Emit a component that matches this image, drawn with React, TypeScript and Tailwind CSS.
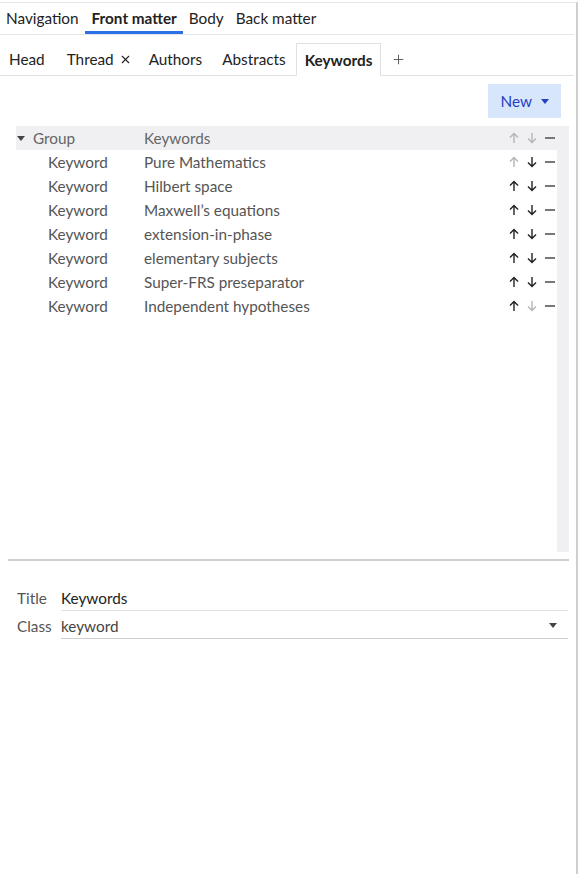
import { Plus, X } from 'lucide-react';

const keywords = [
  'Pure Mathematics',
  'Hilbert space',
  'Maxwell’s equations',
  'extension-in-phase',
  'elementary subjects',
  'Super-FRS preseparator',
  'Independent hypotheses',
];

function Arrow({ dir, faded }: { dir: 'up' | 'down'; faded?: boolean }) {
  return (
    <svg
      width="10"
      height="12"
      viewBox="0 0 10 12"
      className={faded ? 'text-[#b5b5b5]' : 'text-[#222]'}
    >
      {dir === 'up' ? (
        <path d="M5 11V1.5M1 5.5L5 1.5L9 5.5" stroke="currentColor" strokeWidth="1.4" fill="none" />
      ) : (
        <path d="M5 1v9.5M1 6.5L5 10.5L9 6.5" stroke="currentColor" strokeWidth="1.4" fill="none" />
      )}
    </svg>
  );
}

function RowActions({ upFaded, downFaded }: { upFaded?: boolean; downFaded?: boolean }) {
  return (
    <div className="flex items-center gap-[8px]">
      <Arrow dir="up" faded={upFaded} />
      <Arrow dir="down" faded={downFaded} />
      <div className="h-[2px] w-[10px] bg-[#777]" />
    </div>
  );
}

function Caret() {
  return (
    <svg width="8" height="5" viewBox="0 0 8 5">
      <path d="M0 0h8L4 5z" fill="currentColor" />
    </svg>
  );
}

export default function App() {
  const topTabs = ['Navigation', 'Front matter', 'Body', 'Back matter'];

  return (
    <div className="h-[874px] w-[578px] overflow-hidden bg-white font-['Lato',sans-serif] text-[15.3px] leading-[22px] text-[#222]">
      <div className="mt-[2px] flex h-[872px] flex-col border-t border-r-2 border-t-[#e6e4ec] border-r-[#cfcfcf] pr-[2px]">
        <div className="flex h-[32px] items-stretch border-b border-[#e6e4ec]">
          {topTabs.map((t) => (
            <div
              key={t}
              className={`flex items-center pb-[1px] ${
                t === 'Front matter'
                  ? 'border-b-[3px] border-[#2b70e6] pl-[7px] pr-[6px] pt-[3px] font-bold'
                  : 'px-[6px]'
              }`}
            >
              {t}
            </div>
          ))}
        </div>

        <div className="flex h-[41px] items-end border-b border-[#e0e0e6]">
          <div className="flex h-[32px] items-center pl-[9px] pr-[10px]">
            <span>Head</span>
            <span className="ml-[22px] flex items-center gap-[5px]">
              Thread <X size={13} strokeWidth={2} />
            </span>
            <span className="ml-[17px]">Authors</span>
            <span className="ml-[20px]">Abstracts</span>
          </div>
          <div className="-mb-px flex h-[33px] items-center border border-b-white border-[#e0e0e6] bg-white px-[8px] font-bold">
            Keywords
          </div>
          <div className="flex h-[32px] items-center pl-[10px] text-[#555]">
            <Plus size={15} strokeWidth={1.5} />
          </div>
        </div>

        <div className="flex justify-end pr-[13px] pt-[8px]">
          <button
            type="button"
            className="flex h-[34px] items-center gap-[9px] bg-[#d7e6fb] pl-[13px] pr-[12px] text-[#2540c0]"
          >
            New <Caret />
          </button>
        </div>

        <div className="ml-[16px] mr-[5px] mt-[8px] flex h-[426px]">
          <div className="flex flex-1 flex-col">
            <div className="flex h-[24px] items-center bg-[#f0f0f2] text-[#666]">
              <div className="flex w-[128px] items-center">
                <span className="ml-[1px] mr-[8px] text-[#444]">
                  <Caret />
                </span>
                Group
              </div>
              <div className="flex-1">Keywords</div>
              <div className="pr-[2px]">
                <RowActions upFaded downFaded />
              </div>
            </div>
            {keywords.map((k, i) => (
              <div key={k} className="flex h-[24px] items-center text-[#555]">
                <div className="w-[128px] pl-[32px]">Keyword</div>
                <div className="flex-1">{k}</div>
                <div className="pr-[2px]">
                  <RowActions upFaded={i === 0} downFaded={i === keywords.length - 1} />
                </div>
              </div>
            ))}
          </div>
          <div className="w-[12px] bg-[#f0f0f2]" />
        </div>

        <div className="ml-[8px] mr-[5px] mt-[7px] h-[2px] bg-[#cfcfcf]" />

        <div className="mt-[24px] flex flex-col pl-[17px] pr-[6px]">
          <div className="flex h-[26px] items-stretch">
            <div className="flex w-[44px] items-center text-[#555]">Title</div>
            <div className="flex flex-1 items-center border-b border-[#e2e2e2]">Keywords</div>
          </div>
          <div className="mt-[2px] flex h-[26px] items-stretch">
            <div className="flex w-[44px] items-center text-[#555]">Class</div>
            <div className="flex flex-1 items-center justify-between border-b border-[#cfcfcf] pr-[11px] text-[#444]">
              keyword
              <Caret />
            </div>
          </div>
        </div>
      </div>
    </div>
  );
}
